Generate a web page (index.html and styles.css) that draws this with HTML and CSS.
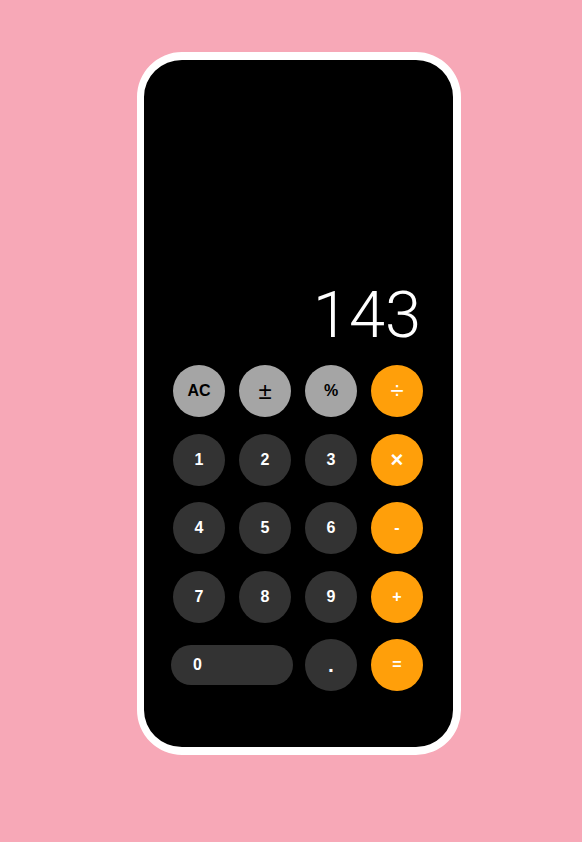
FILE: index.html
```html
<!DOCTYPE html>
<html lang="en">
<head>
<meta charset="utf-8">
<title>Calculator</title>
<link rel="stylesheet" href="styles.css">
</head>
<body>
<div class="phone">
  <div class="screen">
    <div class="display">143</div>
    <div class="keys">
      <button class="key gray">AC</button>
      <button class="key gray sym">±</button>
      <button class="key gray">%</button>
      <button class="key orange sym">÷</button>
      <button class="key dark">1</button>
      <button class="key dark">2</button>
      <button class="key dark">3</button>
      <button class="key orange times">×</button>
      <button class="key dark">4</button>
      <button class="key dark">5</button>
      <button class="key dark">6</button>
      <button class="key orange">-</button>
      <button class="key dark">7</button>
      <button class="key dark">8</button>
      <button class="key dark">9</button>
      <button class="key orange">+</button>
      <button class="key dark zero">0</button>
      <button class="key dark dot">.</button>
      <button class="key orange">=</button>
    </div>
  </div>
</div>
</body>
</html>
```
FILE: styles.css
```css
html, body {
  margin: 0;
  padding: 0;
}
body {
  background: #f7a8b7;
  min-height: 842px;
  font-family: "Liberation Sans", Arial, sans-serif;
}
.phone {
  margin: 52px 0 0 137px;
  width: 309px;
  height: 687px;
  border: 8px solid #ffffff;
  border-left-width: 7px;
  border-radius: 45px;
  background: #000;
  overflow: hidden;
}
.screen {
  height: 100%;
  display: flex;
  flex-direction: column;
  justify-content: flex-end;
  padding: 0 30px 56px 29px;
  box-sizing: border-box;
}
.display {
  color: #fff;
  font-family: Roboto, "Liberation Sans", sans-serif;
  font-weight: 300;
  font-size: 65px;
  line-height: 65px;
  text-align: right;
  padding-right: 2px;
  margin-bottom: 17px;
}
.keys {
  display: grid;
  grid-template-columns: repeat(4, 52px);
  grid-auto-rows: 52px;
  column-gap: 14px;
  row-gap: 16.5px;
}
.key {
  border: none;
  padding: 0;
  margin: 0;
  width: 52px;
  height: 52px;
  border-radius: 50%;
  font-family: "Liberation Sans", Arial, sans-serif;
  font-weight: 700;
  font-size: 16px;
  display: flex;
  align-items: center;
  justify-content: center;
}
.gray {
  background: #a5a5a5;
  color: #000;
}
.dark {
  background: #333333;
  color: #fff;
}
.orange {
  background: #ff9f0a;
  color: #fff;
}
.sym {
  font-weight: 400;
  font-size: 24px;
}
.times {
  font-size: 22px;
}
.dot {
  font-size: 21px;
}
.zero {
  grid-column: span 2;
  width: 122px;
  height: 40px;
  border-radius: 20px;
  align-self: center;
  justify-content: flex-start;
  padding-left: 22px;
  margin-left: -2px;
}
```
